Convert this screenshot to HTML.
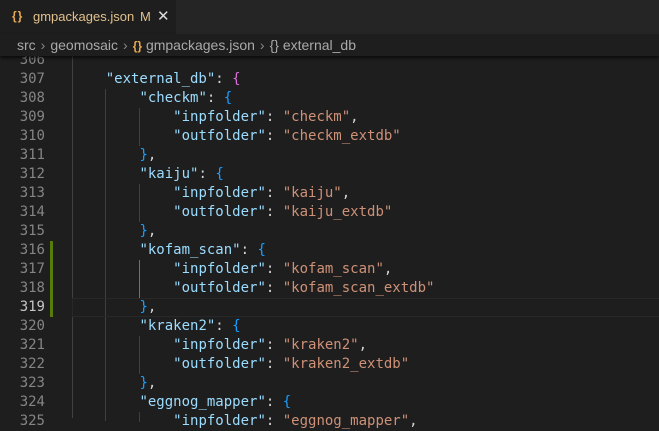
<!DOCTYPE html>
<html><head><meta charset="utf-8"><style>
body{margin:0;width:659px;height:418px;overflow:hidden;background:#1e1e1e;position:relative;font-family:"Liberation Sans",sans-serif}
.tabs{position:absolute;left:0;top:0;width:659px;height:34px;background:#252526}
.tab{position:absolute;left:0;top:0;width:176px;height:34px;background:#1e1e1e;font-size:13px;color:#e2c08d}
.bc{position:absolute;left:0;top:34px;width:659px;height:22px;background:#1e1e1e;box-shadow:0 2px 3px #000a;z-index:5;font-size:14px;color:#a9a9a9}
.bc i{font-style:normal;color:#888;margin:0 5px}
.code{position:absolute;left:0;top:51px;width:659px;font-family:"DejaVu Sans Mono",monospace;font-size:14px;z-index:1}
.l{position:relative;height:19px;line-height:19px;white-space:pre}
.n{position:absolute;right:614px;color:#858585;text-align:right}
.t{position:absolute;left:72px;color:#d4d4d4}
.k{color:#9cdcfe}.s{color:#ce9178}.p{color:#da70d6}.b{color:#179fff}
.g{position:absolute;width:1px;background:#404040;z-index:0}
</style></head><body>
<div class="tabs"><div class="tab">
<span style="position:absolute;left:12px;top:9px;color:#e8ab53;font-weight:bold;font-size:12px;letter-spacing:1px">{}</span>
<span style="position:absolute;left:33px;top:9px">gmpackages.json</span>
<span style="position:absolute;left:140px;top:9px">M</span>
<span style="position:absolute;left:157px;top:7px;color:#ddd;font-size:15px">✕</span>
</div></div>
<div class="bc">
<span style="position:absolute;left:17px;top:3px;white-space:nowrap">src<i>›</i>geomosaic<i>›</i><b style="color:#e8ab53;font-size:12px">{}</b> gmpackages.json<i>›</i>{} external_db</span>
</div>
<div class="g" style="left:72px;top:56px;height:362px"></div>
<div class="g" style="left:105px;top:89px;height:332px"></div>
<div class="g" style="left:139px;top:108px;height:38px"></div>
<div class="g" style="left:139px;top:184px;height:38px"></div>
<div class="g" style="left:139px;top:260px;height:38px;background:#707070"></div>
<div class="g" style="left:139px;top:336px;height:38px"></div>
<div class="g" style="left:139px;top:412px;height:10px"></div>
<div style="position:absolute;left:50px;top:241px;width:3px;height:76px;background:#587c0c"></div>
<div style="position:absolute;left:72px;top:298px;width:587px;height:17px;border:1px solid #282828"></div>
<div class="code">
<div class="l"><span class="n">306</span></div>
<div class="l"><span class="n">307</span><span class="t">    <span class="k">"external_db"</span>: <span class="p">{</span></span></div>
<div class="l"><span class="n">308</span><span class="t">        <span class="k">"checkm"</span>: <span class="b">{</span></span></div>
<div class="l"><span class="n">309</span><span class="t">            <span class="k">"inpfolder"</span>: <span class="s">"checkm"</span>,</span></div>
<div class="l"><span class="n">310</span><span class="t">            <span class="k">"outfolder"</span>: <span class="s">"checkm_extdb"</span></span></div>
<div class="l"><span class="n">311</span><span class="t">        <span class="b">}</span>,</span></div>
<div class="l"><span class="n">312</span><span class="t">        <span class="k">"kaiju"</span>: <span class="b">{</span></span></div>
<div class="l"><span class="n">313</span><span class="t">            <span class="k">"inpfolder"</span>: <span class="s">"kaiju"</span>,</span></div>
<div class="l"><span class="n">314</span><span class="t">            <span class="k">"outfolder"</span>: <span class="s">"kaiju_extdb"</span></span></div>
<div class="l"><span class="n">315</span><span class="t">        <span class="b">}</span>,</span></div>
<div class="l"><span class="n">316</span><span class="t">        <span class="k">"kofam_scan"</span>: <span class="b">{</span></span></div>
<div class="l"><span class="n">317</span><span class="t">            <span class="k">"inpfolder"</span>: <span class="s">"kofam_scan"</span>,</span></div>
<div class="l"><span class="n">318</span><span class="t">            <span class="k">"outfolder"</span>: <span class="s">"kofam_scan_extdb"</span></span></div>
<div class="l"><span class="n" style="color:#c6c6c6">319</span><span class="t">        <span class="b">}</span>,</span></div>
<div class="l"><span class="n">320</span><span class="t">        <span class="k">"kraken2"</span>: <span class="b">{</span></span></div>
<div class="l"><span class="n">321</span><span class="t">            <span class="k">"inpfolder"</span>: <span class="s">"kraken2"</span>,</span></div>
<div class="l"><span class="n">322</span><span class="t">            <span class="k">"outfolder"</span>: <span class="s">"kraken2_extdb"</span></span></div>
<div class="l"><span class="n">323</span><span class="t">        <span class="b">}</span>,</span></div>
<div class="l"><span class="n">324</span><span class="t">        <span class="k">"eggnog_mapper"</span>: <span class="b">{</span></span></div>
<div class="l"><span class="n">325</span><span class="t">            <span class="k">"inpfolder"</span>: <span class="s">"eggnog_mapper"</span>,</span></div>
</div>
</body></html>
